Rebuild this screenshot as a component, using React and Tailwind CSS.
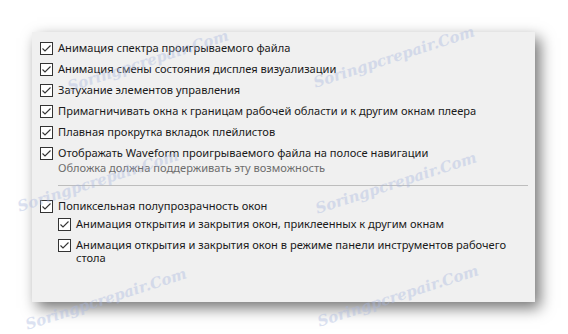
import React from "react";

const Check = () => (
  <span className="w-[13px] h-[13px] shrink-0 border border-[#333333] bg-white flex items-center justify-center">
    <svg width="11" height="11" viewBox="0 0 11 11">
      <path d="M1.5 5.5 L4 8 L9.5 2.5" fill="none" stroke="#333333" strokeWidth="1.1" />
    </svg>
  </span>
);

const Row = ({ children, className = "" }) => (
  <div className={`flex items-center gap-[5px] h-[21px] ${className}`}>
    <Check />
    <span className="whitespace-nowrap">{children}</span>
  </div>
);

// watermark overlays
const marks = [
  { left: 68, top: 76 },
  { left: 314, top: 72 },
  { left: 18, top: 196 },
  { left: 316, top: 198 },
  { left: 26, top: 314 },
  { left: 318, top: 311 },
];

const App = () => {
  return (
    <div
      className="relative w-[568px] h-[334px] bg-white overflow-hidden pt-[32px] pl-[32px] text-[11.1px] text-[#1a1a1a]"
      style={{ fontFamily: '"Noto Sans", "Open Sans", sans-serif' }}
    >
      <div className="w-[503px] h-[270px] bg-[#f0f0f0] pt-[6px] pl-[8px] pr-[7px] shadow-[5px_6px_14px_rgba(0,0,0,0.55)]">
        <Row>Анимация спектра проигрываемого файла</Row>
        <Row>Анимация смены состояния дисплея визуализации</Row>
        <Row>Затухание элементов управления</Row>
        <Row>Примагничивать окна к границам рабочей области и к другим окнам плеера</Row>
        <Row>Плавная прокрутка вкладок плейлистов</Row>
        <Row>Отображать Waveform проигрываемого файла на полосе навигации</Row>
        <div className="pl-[18px] -mt-[3px] leading-[14px] text-[#6d6d6d]">
          Обложка должна поддерживать эту возможность
        </div>
        <div className="ml-[18px] mt-[10px] h-px bg-[#bdbdbd]" />
        <Row className="mt-[10px]">Попиксельная полупрозрачность окон</Row>
        <div className="pl-[18px] -mt-[3px]">
          <Row>Анимация открытия и закрытия окон, приклеенных к другим окнам</Row>
          <div className="flex items-start gap-[5px] pt-[3px]">
            <span className="mt-[1px]">
              <Check />
            </span>
            <span className="leading-[13px] whitespace-nowrap">
              Анимация открытия и закрытия окон в режиме панели инструментов рабочего
              <br />
              стола
            </span>
          </div>
        </div>
      </div>
      {marks.map((m, i) => (
        <span
          key={i}
          className="absolute pointer-events-none whitespace-nowrap italic font-bold text-[15px] text-[#a9b8e0] opacity-40 -rotate-[18deg] origin-left"
          style={{ left: m.left, top: m.top, fontFamily: '"DejaVu Serif", serif' }}
        >
          Soringpcrepair.Com
        </span>
      ))}
    </div>
  );
};

export default App;
